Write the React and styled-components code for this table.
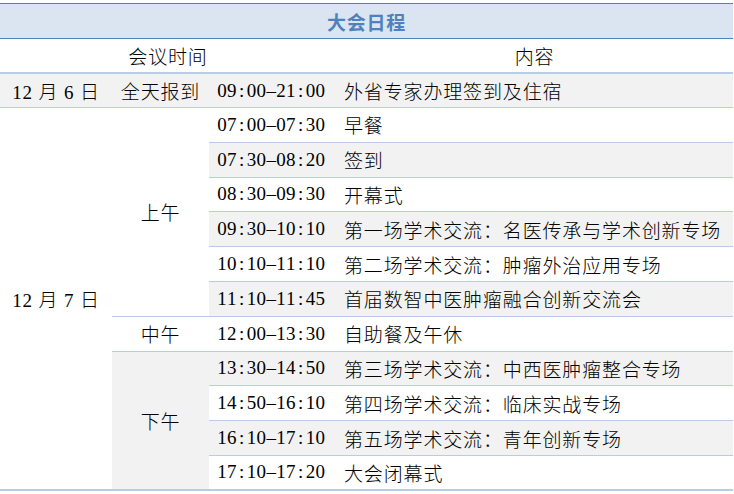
import styled, { createGlobalStyle } from 'styled-components';

const GlobalStyle = createGlobalStyle`
  html, body {
    margin: 0;
    background: #ffffff;
  }
  body {
    font-family: "Liberation Serif", "Noto Sans CJK SC", serif;
    color: #000000;
  }
`;

const morning = [
    ['07:00–07:30', '早餐'],
    ['07:30–08:20', '签到'],
    ['08:30–09:30', '开幕式'],
    ['09:30–10:10', '第一场学术交流：名医传承与学术创新专场'],
    ['10:10–11:10', '第二场学术交流：肿瘤外治应用专场'],
    ['11:10–11:45', '首届数智中医肿瘤融合创新交流会'],
];

const afternoon = [
    ['13:30–14:50', '第三场学术交流：中西医肿瘤整合专场'],
    ['14:50–16:10', '第四场学术交流：临床实战专场'],
    ['16:10–17:10', '第五场学术交流：青年创新专场'],
    ['17:10–17:20', '大会闭幕式'],
];

function Clock({ value }) {
    return [...value].map((c, i) => <Glyph key={i}>{c}</Glyph>);
}

export default function App() {
    const total = morning.length + 1 + afternoon.length;

    return (
        <Page>
            <GlobalStyle />
            <Title>大会日程</Title>
            <Grid>
                <Cell $cols={3} $center $line={2}>会议时间</Cell>
                <Cell $center $line={2}>内容</Cell>

                <Cell $center $shade>12 月 6 日</Cell>
                <Cell $center $shade>全天报到</Cell>
                <Cell $shade><Clock value='09:00–21:00' /></Cell>
                <Cell $shade>外省专家办理签到及住宿</Cell>

                <Cell $rows={total} $center $line={2}>12 月 7 日</Cell>
                <Cell $rows={morning.length} $center>上午</Cell>
                {morning.map(([time, what], i) => [
                    <Cell key={time} $shade={i % 2 === 1}><Clock value={time} /></Cell>,
                    <Cell key={what} $shade={i % 2 === 1}>{what}</Cell>,
                ])}

                <Cell $center>中午</Cell>
                <Cell><Clock value='12:00–13:30' /></Cell>
                <Cell>自助餐及午休</Cell>

                <Cell $rows={afternoon.length} $center $shade $line={2}>下午</Cell>
                {afternoon.map(([time, what], i) => {
                    const last = i === afternoon.length - 1;
                    return [
                        <Cell key={time} $shade={i % 2 === 0} $line={last ? 2 : 1}><Clock value={time} /></Cell>,
                        <Cell key={what} $shade={i % 2 === 0} $line={last ? 2 : 1}>{what}</Cell>,
                    ];
                })}
            </Grid>
        </Page>
    );
}

const Page = styled.div`
    padding-top: 3px;
    width: 733px;
`

const Title = styled.div`
    height: 36px;
    box-sizing: border-box;
    display: flex;
    align-items: center;
    justify-content: center;
    background: #dbe5f1;
    border-top: 1px solid #4f81bd;
    border-bottom: 1px solid #4f81bd;
    font-family: "Noto Sans CJK SC", sans-serif;
    font-weight: 700;
    font-size: 19px;
    letter-spacing: 0.8px;
    color: #4f81bd;
`

const Grid = styled.div`
    display: grid;
    grid-template-columns: 112px 97px 127px 397px;
    grid-template-rows: 35px 34px repeat(11, 34.8px);
`

const Cell = styled.div`
    grid-column: span ${p => p.$cols || 1};
    grid-row: span ${p => p.$rows || 1};
    box-sizing: border-box;
    display: flex;
    align-items: center;
    justify-content: ${p => (p.$center ? 'center' : 'flex-start')};
    padding: 0 ${p => (p.$center ? 0 : 8)}px;
    background: ${p => (p.$shade ? '#f2f2f2' : '#ffffff')};
    border-bottom: ${p => p.$line || 1}px solid #b8cce4;
    font-size: 19px;
    font-weight: 300;
    letter-spacing: 0.85px;
    white-space: nowrap;
`

const Glyph = styled.span`
    display: inline-block;
    width: 9.85px;
    text-align: center;
    letter-spacing: 0;
`
